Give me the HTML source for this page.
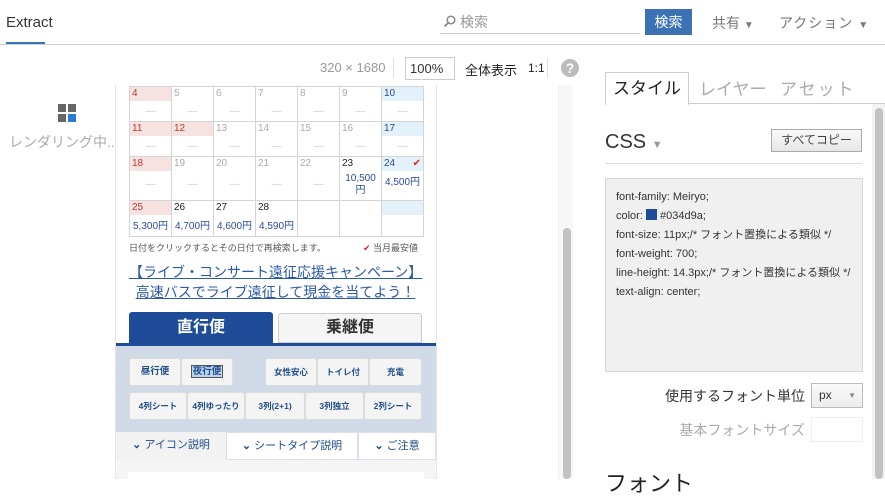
<!DOCTYPE html>
<html><head><meta charset="utf-8"><style>
*{box-sizing:border-box;margin:0;padding:0}
body{width:885px;height:479px;overflow:hidden;background:#fff;font-family:"Liberation Sans","Noto Sans CJK JP",sans-serif;position:relative;color:#333}
.a{position:absolute;white-space:nowrap}
.cal{position:absolute;left:129px;top:86px;border-collapse:collapse;font-size:10px}
.cal td{border:1px solid #d4d4d4;width:42px;vertical-align:top;padding:0;position:relative}
.cal .d{height:14px;padding-left:2px;color:#aaa;line-height:14px}
.cal .r .d{background:#f7e2e2;color:#c0392b}
.cal .b .d{background:#e2f1fa;color:#2a4a8a}
.cal .k .d{color:#222}
.cal .m{text-align:center;color:#ccc;font-size:10px;margin-top:5px}
.cal .p{color:#2a4a9a;font-size:10px;text-align:center}
.btn{position:absolute;background:#f4f4f4;border:1px solid #dcdcdc;border-radius:3px;font-size:9.5px;font-weight:bold;color:#1e4d8a;text-align:center;line-height:26px}
</style></head><body>
<!-- header -->
<div class="a" style="left:6px;top:14px;font-size:15px;color:#333">Extract</div>
<div class="a" style="left:6px;top:42px;width:39px;height:2px;background:#3a74b8"></div>
<div class="a" style="left:0;top:44px;width:885px;height:1px;background:#d0d0d0"></div>
<svg class="a" style="left:443px;top:15px" width="13" height="13" viewBox="0 0 13 13"><circle cx="8" cy="5" r="3.8" fill="none" stroke="#888" stroke-width="1.5"/><path d="M5.3 7.7 1.5 11.5" stroke="#888" stroke-width="1.8"/></svg>
<div class="a" style="left:460px;top:12px;font-size:14px;color:#999">検索</div>
<div class="a" style="left:440px;top:33px;width:200px;height:1px;background:#ccc"></div>
<div class="a" style="left:645px;top:9px;width:47px;height:26px;background:#3a72b4;color:#fff;font-size:14px;text-align:center;line-height:26px">検索</div>
<div class="a" style="left:712px;top:13px;font-size:14px;color:#777">共有 <span style="font-size:10px">▼</span></div>
<div class="a" style="left:779px;top:13px;font-size:14px;color:#777;letter-spacing:1px">アクション <span style="font-size:10px">▼</span></div>
<!-- toolbar -->
<div class="a" style="left:320px;top:60px;font-size:13px;color:#999">320 × 1680</div>
<div class="a" style="left:393px;top:58px;width:1px;height:20px;background:#ddd"></div>
<div class="a" style="left:405px;top:57px;width:50px;height:23px;border:1px solid #ccc;font-size:13px;line-height:21px;padding-left:4px;color:#333">100%</div>
<div class="a" style="left:465px;top:60px;font-size:13px;color:#222">全体表示</div>
<div class="a" style="left:528px;top:61px;font-size:12px;color:#222">1:1</div>
<div class="a" style="left:547px;top:58px;width:1px;height:20px;background:#ddd"></div>
<div class="a" style="left:561px;top:59px;width:18px;height:18px;border-radius:50%;background:#bbb;color:#fff;font-weight:bold;font-size:14px;text-align:center;line-height:18px">?</div>
<!-- left rendering -->
<div class="a" style="left:58px;top:104px;width:8px;height:8px;background:#666"></div>
<div class="a" style="left:68px;top:104px;width:8px;height:8px;background:#666"></div>
<div class="a" style="left:58px;top:114px;width:8px;height:8px;background:#666"></div>
<div class="a" style="left:68px;top:114px;width:8px;height:8px;background:#2d7ad6"></div>
<div class="a" style="left:9px;top:132px;font-size:14px;color:#aaa">レンダリング中...</div>
<!-- preview page -->
<div class="a" style="left:115px;top:85px;width:322px;height:394px;border-left:1px solid #e6e6e6;border-right:1px solid #e6e6e6;background:#fff"></div>
<div class="a" style="left:558px;top:85px;width:15px;height:394px;background:#f7f7f7;border-left:1px solid #eee"></div>
<div class="a" style="left:563px;top:228px;width:8px;height:251px;background:#c2c2c2;border-radius:4px"></div>
<table class="cal">
<tr style="height:35px"><td class="r"><div class="d">4</div><div class="m">—</div></td><td><div class="d">5</div><div class="m">—</div></td><td><div class="d">6</div><div class="m">—</div></td><td><div class="d">7</div><div class="m">—</div></td><td><div class="d">8</div><div class="m">—</div></td><td><div class="d">9</div><div class="m">—</div></td><td class="b"><div class="d">10</div><div class="m">—</div></td></tr>
<tr style="height:35px"><td class="r"><div class="d">11</div><div class="m">—</div></td><td class="r"><div class="d">12</div><div class="m">—</div></td><td><div class="d">13</div><div class="m">—</div></td><td><div class="d">14</div><div class="m">—</div></td><td><div class="d">15</div><div class="m">—</div></td><td><div class="d">16</div><div class="m">—</div></td><td class="b"><div class="d">17</div><div class="m">—</div></td></tr>
<tr style="height:44px"><td class="r"><div class="d">18</div><div class="m" style="margin-top:8px">—</div></td><td><div class="d">19</div><div class="m" style="margin-top:8px">—</div></td><td><div class="d">20</div><div class="m" style="margin-top:8px">—</div></td><td><div class="d">21</div><div class="m" style="margin-top:8px">—</div></td><td><div class="d">22</div><div class="m" style="margin-top:8px">—</div></td><td class="k"><div class="d">23</div><div class="p" style="line-height:12px;margin-top:2px">10,500<br>円</div></td><td class="b"><div class="d">24 <span style="color:#d22;float:right;margin-right:2px">✔</span></div><div class="p" style="margin-top:2px">4,500円</div></td></tr>
<tr style="height:36px"><td class="r"><div class="d">25</div><div class="p" style="margin-top:2px">5,300円</div></td><td class="k"><div class="d">26</div><div class="p" style="margin-top:2px">4,700円</div></td><td class="k"><div class="d">27</div><div class="p" style="margin-top:2px">4,600円</div></td><td class="k"><div class="d">28</div><div class="p" style="margin-top:2px">4,590円</div></td><td></td><td></td><td class="b"><div class="d"></div></td></tr>
</table>
<div class="a" style="left:129px;top:241px;font-size:9px;color:#555">日付をクリックするとその日付で再検索します。</div>
<div class="a" style="left:363px;top:241px;font-size:9px;color:#555"><span style="color:#d22">✔</span> 当月最安値</div>
<div class="a" style="left:129px;top:262px;width:293px;text-align:center;font-size:14px;color:#2b5aa8;text-decoration:underline;line-height:20px">【ライブ・コンサート遠征応援キャンペーン】<br>高速バスでライブ遠征して現金を当てよう！</div>
<div class="a" style="left:129px;top:312px;width:144px;height:33px;background:#1e4c99;border-radius:3px 3px 0 0;color:#fff;font-size:16px;font-weight:bold;text-align:center;line-height:31px">直行便</div>
<div class="a" style="left:278px;top:313px;width:144px;height:30px;background:#f5f5f5;border:1px solid #ccc;border-radius:3px 3px 0 0;color:#333;font-size:16px;font-weight:bold;text-align:center;line-height:28px">乗継便</div>
<div class="a" style="left:116px;top:343px;width:320px;height:3px;background:#1e4c99"></div>
<div class="a" style="left:116px;top:346px;width:320px;height:86px;background:#cfdae6"></div>
<div class="btn" style="left:129px;top:358px;width:52px;height:28px">昼行便</div>
<div class="btn" style="left:181px;top:358px;width:52px;height:28px"><span style="background:#bcd3ee;border:1px solid #555;padding:0 1px">夜行便</span></div>
<div class="btn" style="left:265px;top:358px;width:52px;height:28px;font-size:8.5px">女性安心</div>
<div class="btn" style="left:317px;top:358px;width:52px;height:28px;font-size:8.5px">トイレ付</div>
<div class="btn" style="left:369px;top:358px;width:53px;height:28px;font-size:8.5px">充電</div>
<div class="btn" style="left:129px;top:392px;width:58px;height:28px;font-size:8.5px">4列シート</div>
<div class="btn" style="left:187px;top:392px;width:58px;height:28px;font-size:8.5px">4列ゆったり</div>
<div class="btn" style="left:245px;top:392px;width:60px;height:28px;font-size:8.5px">3列(2+1)</div>
<div class="btn" style="left:305px;top:392px;width:59px;height:28px;font-size:8.5px">3列独立</div>
<div class="btn" style="left:364px;top:392px;width:58px;height:28px;font-size:8.5px">2列シート</div>
<div class="a" style="left:116px;top:432px;width:320px;height:47px;background:#f5f5f5"></div>
<div class="a" style="left:116px;top:432px;width:110px;height:28px;background:#f2f2f2;font-size:11px;color:#1e4d8a;text-align:center;line-height:26px"><b>⌄</b> アイコン説明</div>
<div class="a" style="left:226px;top:432px;width:132px;height:28px;background:#fff;border:1px solid #dde;font-size:11px;color:#1e4d8a;text-align:center;line-height:26px"><b>⌄</b> シートタイプ説明</div>
<div class="a" style="left:358px;top:432px;width:78px;height:28px;background:#fff;border:1px solid #dde;font-size:11px;color:#1e4d8a;text-align:center;line-height:26px"><b>⌄</b> ご注意</div>
<div class="a" style="left:128px;top:472px;width:296px;height:7px;background:#fff"></div>
<!-- right panel -->
<div class="a" style="left:605px;top:72px;width:84px;height:33px;border:1px solid #ccc;border-bottom:none;background:#fff;font-size:17px;color:#222;text-align:center;line-height:32px">スタイル</div>
<div class="a" style="left:688px;top:103px;width:197px;height:1px;background:#ccc"></div>
<div class="a" style="left:699px;top:75px;font-size:17px;color:#aaa">レイヤー</div>
<div class="a" style="left:780px;top:75px;font-size:17px;color:#aaa;letter-spacing:2px">アセット</div>
<div class="a" style="left:872px;top:104px;width:13px;height:375px;background:#f3f3f3"></div>
<div class="a" style="left:875px;top:108px;width:8px;height:371px;background:#c2c2c2;border-radius:4px"></div>
<div class="a" style="left:605px;top:131px;font-size:20px;color:#333">CSS <span style="font-size:11px;color:#999">▼</span></div>
<div class="a" style="left:771px;top:129px;width:91px;height:23px;border:1px solid #aaa;background:linear-gradient(#fafafa,#e6e6e6);font-size:12px;color:#444;text-align:center;line-height:21px">すべてコピー</div>
<div class="a" style="left:605px;top:163px;width:257px;height:1px;background:#ddd"></div>
<div class="a" style="left:605px;top:178px;width:258px;height:194px;background:#f0f0f0;border:1px solid #d6d6d6;font-size:11px;color:#333;padding:9px 0 0 10px;line-height:19px">font-family: Meiryo;<br>color: <span style="display:inline-block;width:11px;height:11px;background:#1e4c99;vertical-align:-1px"></span> #034d9a;<br>font-size: 11px;/* フォント置換による類似 */<br>font-weight: 700;<br>line-height: 14.3px;/* フォント置換による類似 */<br>text-align: center;</div>
<div class="a" style="left:605px;top:386px;width:200px;text-align:right;font-size:14px;color:#333">使用するフォント単位</div>
<div class="a" style="left:811px;top:383px;width:52px;height:25px;border:1px solid #bbb;background:linear-gradient(#fafafa,#ececec);font-size:12px;padding-left:7px;line-height:23px;color:#333">px<span style="position:absolute;right:6px;font-size:8px;color:#888">▼</span></div>
<div class="a" style="left:605px;top:420px;width:200px;text-align:right;font-size:14px;color:#aaa">基本フォントサイズ</div>
<div class="a" style="left:811px;top:417px;width:52px;height:25px;border:1px solid #eee;background:#fff"></div>
<div class="a" style="left:605px;top:466px;font-size:22px;color:#222">フォント</div>
</body></html>
